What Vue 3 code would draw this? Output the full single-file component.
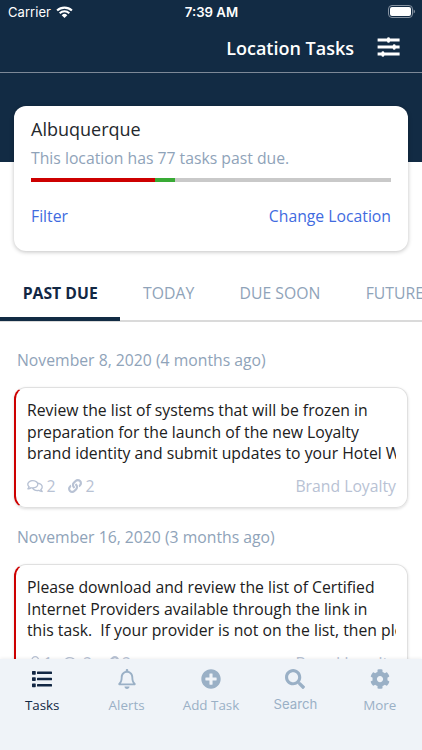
<script setup>
const tabs = ['PAST DUE', 'TODAY', 'DUE SOON', 'FUTURE']

const groups = [
  {
    date: 'November 8, 2020 (4 months ago)',
    lines: [
      'Review the list of systems that will be frozen in',
      'preparation for the launch of the new Loyalty',
      'brand identity and submit updates to your Hotel W',
    ],
    comments: 2,
    links: 2,
    category: 'Brand Loyalty',
  },
  {
    date: 'November 16, 2020 (3 months ago)',
    lines: [
      'Please download and review the list of Certified',
      'Internet Providers available through the link in',
      'this task.\u00a0 If your provider is not on the list, then ple',
    ],
    people: 1,
    comments: 2,
    links: 2,
    category: 'Brand Loyalty',
  },
]

const icons = {
  user: {
    box: '0 0 448 512',
    d: 'M313.6 304c-28.7 0-42.5 16-89.6 16s-60.8-16-89.6-16C60.2 304 0 364.2 0 438.4V464c0 26.5 21.5 48 48 48h352c26.5 0 48-21.5 48-48v-25.6c0-74.2-60.2-134.4-134.4-134.4zM400 464H48v-25.6c0-47.6 38.8-86.4 86.4-86.4 14.6 0 38.3 16 89.6 16 51.7 0 74.9-16 89.6-16 47.6 0 86.4 38.8 86.4 86.4V464zM224 288c79.5 0 144-64.5 144-144S303.5 0 224 0 80 64.5 80 144s64.5 144 144 144zm0-240c52.9 0 96 43.1 96 96s-43.1 96-96 96-96-43.1-96-96 43.1-96 96-96z',
  },
  comments: {
    box: '0 0 576 512',
    d: 'M532 386.2c27.5-27.1 44-61.1 44-98.2 0-80-76.5-146.1-176.2-157.9C368.3 72.5 294.3 32 208 32 93.1 32 0 103.6 0 192c0 37 16.5 71 44 98.2-15.3 30.7-37.3 54.5-37.7 54.9-6.3 6.7-8.1 16.5-4.4 25 3.6 8.5 12 14 21.2 14 53.5 0 96.7-20.2 125.2-38.8 9.2 2.1 18.7 3.7 28.4 4.9C208.1 407.6 281.8 448 368 448c20.8 0 40.8-2.4 59.8-6.8C456.3 459.7 499.4 480 553 480c9.2 0 17.5-5.5 21.2-14 3.6-8.5 1.9-18.3-4.4-25-.4-.3-22.5-24.1-37.8-54.8zm-392.8-92.3L122.1 305c-14.1 9.1-28.5 16.3-43.1 21.4 2.7-4.7 5.4-9.7 8-14.8l15.5-31.1L77.7 256C64.2 242.6 48 220.7 48 192c0-60.7 73.3-112 160-112s160 51.3 160 112-73.3 112-160 112c-16.5 0-33-1.9-49-5.6l-19.8-4.5zM498.3 352l-24.7 24.4 15.5 31.1c2.6 5.1 5.3 10.1 8 14.8-14.6-5.1-29-12.3-43.1-21.4l-17.1-11.1-19.9 4.6c-16 3.7-32.5 5.6-49 5.6-54 0-102.2-20.1-131.3-49.7C338 339.5 416 272.9 416 192c0-3.4-.4-6.7-.7-10C479.7 196.5 528 238.8 528 288c0 28.7-16.2 50.6-29.7 64z',
  },
  link: {
    box: '0 0 512 512',
    d: 'M326.612 185.391c59.747 59.809 58.927 155.698.36 214.59-.11.12-.24.25-.36.37l-67.2 67.2c-59.27 59.27-155.699 59.262-214.96 0-59.27-59.26-59.27-155.7 0-214.96l37.106-37.106c9.84-9.84 26.786-3.3 27.294 10.606.648 17.722 3.826 35.527 9.69 52.721 1.986 5.822.567 12.262-3.783 16.612l-13.087 13.087c-28.026 28.026-28.905 73.66-1.155 101.96 28.024 28.579 74.086 28.749 102.325.51l67.2-67.19c28.191-28.191 28.073-73.757 0-101.83-3.701-3.694-7.429-6.564-10.341-8.569a16.037 16.037 0 0 1-6.947-12.606c-.396-10.567 3.348-21.456 11.698-29.806l21.054-21.055c5.521-5.521 14.182-6.199 20.584-1.731a152.482 152.482 0 0 1 20.522 17.197zM467.547 44.449c-59.261-59.262-155.69-59.27-214.96 0l-67.2 67.2c-.12.12-.25.25-.36.37-58.566 58.892-59.387 154.781.36 214.59a152.454 152.454 0 0 0 20.521 17.196c6.402 4.468 15.064 3.789 20.584-1.731l21.054-21.055c8.35-8.35 12.094-19.239 11.698-29.806a16.037 16.037 0 0 0-6.947-12.606c-2.912-2.005-6.64-4.875-10.341-8.569-28.073-28.073-28.191-73.639 0-101.83l67.2-67.19c28.239-28.239 74.3-28.069 102.325.51 27.75 28.3 26.872 73.934-1.155 101.96l-13.087 13.087c-4.35 4.35-5.769 10.79-3.783 16.612 5.864 17.194 9.042 34.999 9.69 52.721.509 13.906 17.454 20.446 27.294 10.606l37.106-37.106c59.271-59.259 59.271-155.699.001-214.959z',
  },
}

const nav = [
  {
    label: 'Tasks',
    active: true,
    box: '0 0 512 512',
    d: 'M16 48h64a16 16 0 0 1 16 16v64a16 16 0 0 1-16 16H16a16 16 0 0 1-16-16V64a16 16 0 0 1 16-16zm0 160h64a16 16 0 0 1 16 16v64a16 16 0 0 1-16 16H16a16 16 0 0 1-16-16v-64a16 16 0 0 1 16-16zm0 160h64a16 16 0 0 1 16 16v64a16 16 0 0 1-16 16H16a16 16 0 0 1-16-16v-64a16 16 0 0 1 16-16zM144 64h352a16 16 0 0 1 16 16v32a16 16 0 0 1-16 16H144a16 16 0 0 1-16-16V80a16 16 0 0 1 16-16zm0 160h352a16 16 0 0 1 16 16v32a16 16 0 0 1-16 16H144a16 16 0 0 1-16-16v-32a16 16 0 0 1 16-16zm0 160h352a16 16 0 0 1 16 16v32a16 16 0 0 1-16 16H144a16 16 0 0 1-16-16v-32a16 16 0 0 1 16-16z',
  },
  {
    label: 'Alerts',
    box: '0 0 448 512',
    d: 'M439.39 362.29c-19.32-20.76-55.47-51.99-55.47-154.29 0-77.7-54.48-139.9-127.94-155.16V32c0-17.67-14.32-32-31.98-32s-31.98 14.33-31.98 32v20.84C118.56 68.1 64.08 130.3 64.08 208c0 102.3-36.15 133.53-55.47 154.29-6 6.45-8.66 14.16-8.61 21.71.11 16.4 12.98 32 32.1 32h383.8c19.12 0 32-15.6 32.1-32 .05-7.55-2.61-15.27-8.61-21.71zM67.53 368c21.22-27.97 44.42-74.33 44.53-159.42 0-.2-.06-.38-.06-.58 0-61.86 50.14-112 112-112s112 50.14 112 112c0 .2-.06.38-.06.58.11 85.1 23.31 131.46 44.53 159.42H67.53zM224 512c35.32 0 63.97-28.65 63.97-64H160.03c0 35.35 28.65 64 63.97 64z',
  },
  {
    label: 'Add Task',
    box: '0 0 512 512',
    d: 'M256 8C119 8 8 119 8 256s111 248 248 248 248-111 248-248S393 8 256 8zm144 276c0 6.6-5.4 12-12 12h-92v92c0 6.6-5.4 12-12 12h-56c-6.6 0-12-5.4-12-12v-92h-92c-6.6 0-12-5.4-12-12v-56c0-6.6 5.4-12 12-12h92v-92c0-6.6 5.4-12 12-12h56c6.6 0 12 5.4 12 12v92h92c6.6 0 12 5.4 12 12v56z',
  },
  {
    label: 'Search',
    system: true,
    box: '0 0 512 512',
    d: 'M505 442.7L405.3 343c-4.5-4.5-10.6-7-17-7H372c27.6-35.3 44-79.7 44-128C416 93.1 322.9 0 208 0S0 93.1 0 208s93.1 208 208 208c48.3 0 92.7-16.4 128-44v16.3c0 6.4 2.5 12.5 7 17l99.7 99.7c9.4 9.4 24.6 9.4 33.9 0l28.3-28.3c9.4-9.4 9.4-24.6.1-34zM208 336c-70.7 0-128-57.2-128-128 0-70.7 57.2-128 128-128 70.7 0 128 57.2 128 128 0 70.7-57.2 128-128 128z',
  },
  {
    label: 'More',
    box: '0 0 512 512',
    d: 'M487.4 315.7l-42.6-24.6c4.3-23.2 4.3-47 0-70.2l42.6-24.6c4.9-2.8 7.1-8.6 5.5-14-11.1-35.6-30-67.8-54.7-94.6-3.8-4.1-10-5.1-14.8-2.3L380.8 110c-17.9-15.4-38.5-27.3-60.8-35.1V25.8c0-5.6-3.9-10.5-9.4-11.7-36.7-8.2-74.3-7.8-109.2 0-5.5 1.2-9.4 6.1-9.4 11.7V75c-22.2 7.9-42.8 19.8-60.8 35.1L88.7 85.5c-4.9-2.8-11-1.9-14.8 2.3-24.7 26.7-43.6 58.9-54.7 94.6-1.7 5.4.6 11.2 5.5 14L67.3 221c-4.3 23.2-4.3 47 0 70.2l-42.6 24.6c-4.9 2.8-7.1 8.6-5.5 14 11.1 35.6 30 67.8 54.7 94.6 3.8 4.1 10 5.1 14.8 2.3l42.6-24.6c17.9 15.4 38.5 27.3 60.8 35.1v49.2c0 5.6 3.9 10.5 9.4 11.7 36.7 8.2 74.3 7.8 109.2 0 5.5-1.2 9.4-6.1 9.4-11.7v-49.2c22.2-7.9 42.8-19.8 60.8-35.1l42.6 24.6c4.9 2.8 11 1.9 14.8-2.3 24.7-26.7 43.6-58.9 54.7-94.6 1.5-5.5-.7-11.3-5.6-14.1zM256 336c-44.1 0-80-35.9-80-80s35.9-80 80-80 80 35.9 80 80-35.9 80-80 80z',
  },
]
</script>

<template>
  <div class="screen">
    <header class="header">
      <div class="status">
        <div class="carrier">
          <span>Carrier</span>
          <svg class="wifi" viewBox="0 0 17 12">
            <path d="M1.1 4.6a10.6 10.6 0 0 1 14.8 0" />
            <path d="M3.7 7.2a6.9 6.9 0 0 1 9.6 0" />
            <path class="dot" d="M8.5 12 5.7 9.2a4 4 0 0 1 5.6 0z" />
          </svg>
        </div>
        <span class="time">7:39 AM</span>
        <div class="power">
          <svg class="battery" viewBox="0 0 27 13">
            <rect class="shell" x=".5" y=".5" width="24" height="12" rx="3.5" />
            <rect class="charge" x="2" y="2" width="21" height="9" rx="2" />
            <path class="tip" d="M25.6 4.5q1.4.6 1.4 2t-1.4 2z" />
          </svg>
        </div>
      </div>
      <div class="titlebar">
        <h1>Location Tasks</h1>
        <svg class="sliders" viewBox="0 0 23 20">
          <path d="M.6 3h22M.6 10h22M.6 17h22" />
          <path class="knobs" d="M11.5 1.6v2.8M17.2 8.6v2.8M5.9 15.6v2.8" />
        </svg>
      </div>
    </header>

    <section class="summary">
      <h2>Albuquerque</h2>
      <p>This location has 77 tasks past due.</p>
      <div class="progress"><i class="late"></i><i class="done"></i></div>
      <div class="actions"><a>Filter</a><a class="change">Change Location</a></div>
    </section>

    <nav class="tabs">
      <div v-for="(tab, i) in tabs" :key="tab" class="tab" :class="{ selected: i === 0 }">
        <span>{{ tab }}</span>
      </div>
    </nav>

    <main class="list">
      <template v-for="group in groups" :key="group.date">
        <h3>{{ group.date }}</h3>
        <article class="task">
          <p v-for="line in group.lines" :key="line">{{ line }}</p>
          <footer>
            <span v-if="group.people" class="count people">
              <svg :viewBox="icons.user.box"><path :d="icons.user.d" /></svg>{{ group.people }}
            </span>
            <span class="count talk">
              <svg :viewBox="icons.comments.box"><path :d="icons.comments.d" /></svg>{{ group.comments }}
            </span>
            <span class="count links">
              <svg :viewBox="icons.link.box"><path :d="icons.link.d" /></svg>{{ group.links }}
            </span>
            <span class="category">{{ group.category }}</span>
          </footer>
        </article>
      </template>
    </main>

    <nav class="bottom">
      <div v-for="item in nav" :key="item.label" class="item" :class="{ active: item.active, system: item.system }">
        <svg :viewBox="item.box"><path :d="item.d" /></svg>
        <span>{{ item.label }}</span>
      </div>
    </nav>
  </div>
</template>

<style>
body {
  margin: 0;
  overflow: hidden;
}
</style>

<style scoped>
* {
  box-sizing: border-box;
}
h1,
h2,
h3,
p {
  margin: 0;
  font-weight: 400;
}
.screen {
  display: flex;
  flex-direction: column;
  width: 422px;
  height: 750px;
  overflow: hidden;
  background: #fff;
  font-family: 'Open Sans', sans-serif;
  font-size: 15.75px;
  white-space: nowrap;
}
.header {
  flex: none;
  height: 162px;
  background: #122b44;
  color: #fff;
}
.status {
  display: grid;
  grid-template-columns: 1fr auto 1fr;
  align-items: center;
  height: 24px;
  padding: 0 7px 0 8px;
  font-family: Inter, sans-serif;
  font-size: 13px;
}
.carrier {
  display: flex;
  align-items: center;
  gap: 5px;
  letter-spacing: 0.05px;
}
.wifi {
  width: 17px;
  height: 12px;
  margin-top: -1px;
  fill: none;
  stroke: #fff;
  stroke-width: 2.1;
}
.wifi .dot {
  fill: #fff;
  stroke: none;
}
.time {
  font-size: 13.2px;
  font-weight: 600;
}
.power {
  display: flex;
  justify-content: flex-end;
}
.battery {
  width: 27px;
  height: 13px;
  margin-top: -1px;
}
.shell {
  fill: none;
  stroke: #8592a1;
}
.charge {
  fill: #fff;
}
.tip {
  fill: #8592a1;
}
.titlebar {
  display: flex;
  justify-content: flex-end;
  align-items: center;
  gap: 23px;
  height: 49px;
  padding-right: 22px;
  border-bottom: 1px solid #7d8998;
}
.titlebar h1 {
  font-size: 18px;
  font-weight: 600;
}
.sliders {
  width: 23px;
  height: 20px;
  margin-bottom: 3px;
  fill: none;
  stroke: #fff;
  stroke-width: 2.8;
}
.knobs {
  stroke-linecap: round;
}
.summary {
  flex: none;
  height: 145px;
  margin: -56px 14px 0;
  padding: 10px 17px 0;
  border-radius: 12px;
  background: #fff;
  box-shadow: 0 1px 4px rgba(0, 0, 0, 0.25);
}
.summary h2 {
  color: #24282d;
  font-size: 18px;
  line-height: 26px;
}
.summary p {
  margin-top: 4px;
  color: #8fa3b9;
  line-height: 24px;
}
.progress {
  display: flex;
  height: 4px;
  margin-top: 8px;
  background: #c9c9c9;
}
.late {
  width: 124px;
  background: #cd0000;
}
.done {
  width: 20px;
  background: #39aa35;
}
.actions {
  display: flex;
  justify-content: space-between;
  margin-top: 22px;
  color: #416bdf;
  line-height: 24px;
}
.tabs {
  display: flex;
  flex: none;
  height: 56px;
  margin-top: 15px;
  border-bottom: 2px solid #dadada;
  color: #8fa3b9;
}
.tab {
  flex: none;
  height: 55px;
  padding: 16px 22.7px 0;
  line-height: 22px;
}
.tab.selected {
  border-bottom: 4px solid #122b44;
  color: #122744;
  font-weight: 700;
}
.list {
  flex: none;
  padding: 26px 14px 0;
}
.list h3 {
  padding-left: 3px;
  color: #8fa3b9;
  font-size: 15.75px;
  line-height: 24px;
}
.task {
  height: 121px;
  margin: 15px 0 17px;
  padding: 12px 11px 0;
  border: 1px solid #e0e0e0;
  border-left: 2px solid #cd0000;
  border-radius: 12px;
  box-shadow: 0 1px 3px rgba(0, 0, 0, 0.14);
}
.task p {
  overflow: hidden;
  color: #202020;
  line-height: 21.7px;
}
.task footer {
  display: flex;
  align-items: center;
  margin-top: 9px;
  color: #b8c2d4;
  line-height: 24px;
}
.count {
  display: flex;
  align-items: center;
  gap: 3.5px;
  margin-right: 12.5px;
}
.count svg {
  width: 16px;
  height: 14px;
  fill: currentColor;
}
.count.people {
  gap: 2px;
  margin-left: 2px;
  margin-right: 11px;
}
.people svg {
  width: 12.5px;
}
.links svg {
  width: 14px;
}
.category {
  margin-left: auto;
}
.bottom {
  position: absolute;
  top: 659px;
  left: 0;
  display: grid;
  grid-template-columns: repeat(5, 1fr);
  width: 422px;
  height: 91px;
  padding-top: 10px;
  background: #eff3f8;
  box-shadow: 0 -1px 3px rgba(0, 0, 0, 0.06);
}
.item {
  display: flex;
  flex-direction: column;
  align-items: center;
  gap: 6px;
  color: #9ab0c6;
  font-size: 13.4px;
  line-height: 20px;
}
.item svg {
  width: 20px;
  height: 20px;
  fill: currentColor;
}
.item.active {
  color: #122744;
}
.item.system {
  gap: 5px;
  font-family: Inter, sans-serif;
  font-size: 13.2px;
}
</style>
